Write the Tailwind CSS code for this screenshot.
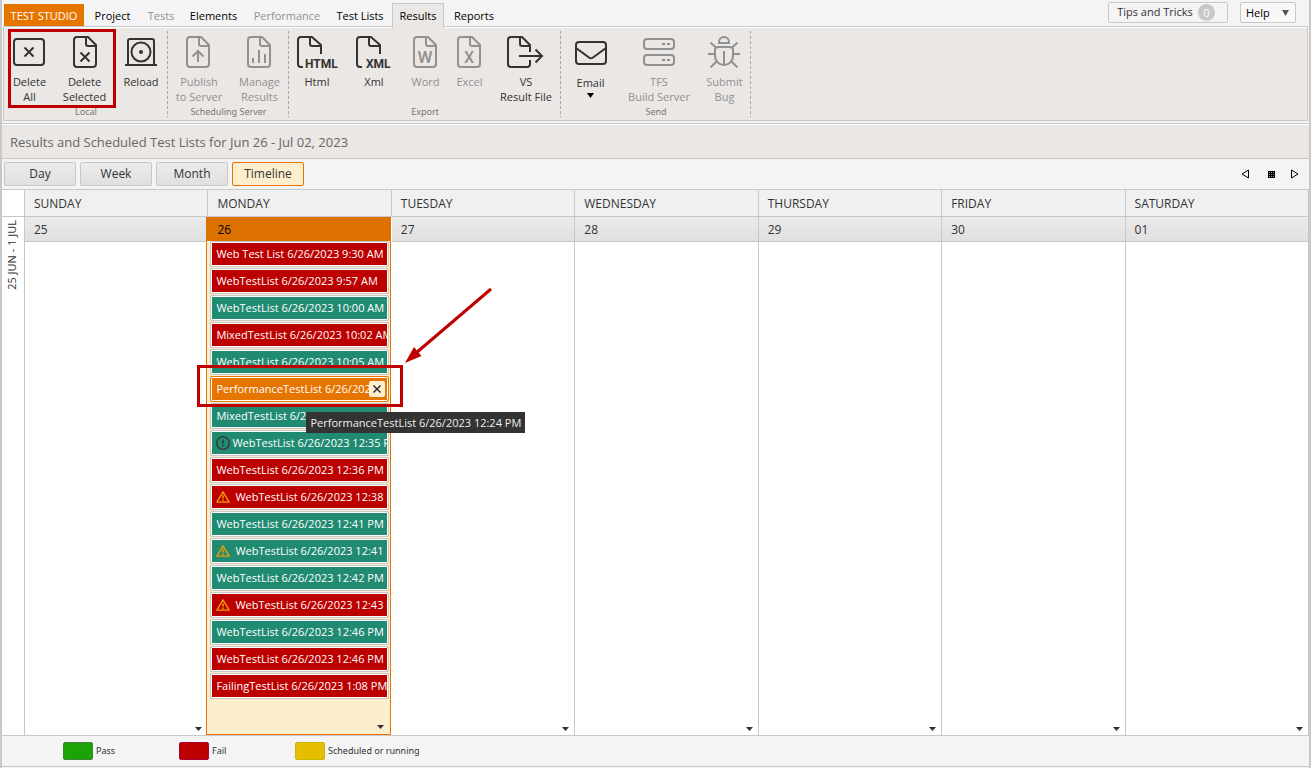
<!DOCTYPE html>
<html lang="en">
<head>
<meta charset="utf-8">
<meta name="viewport" content="width=device-width, initial-scale=1">
<title>Test Studio - Results</title>
<script src="https://cdn.jsdelivr.net/npm/@tailwindcss/browser@4"></script>
</head>
<body class="min-h-screen bg-[#f4f4f4] font-['Open_Sans','Noto_Sans',sans-serif] text-[11px] text-[#333]">
<svg class="hidden" aria-hidden="true">
  <symbol id="file" viewBox="0 0 40 32"><path fill="none" stroke="currentColor" stroke-width="2" stroke-linejoin="round" d="M12 1h11l8 8v19a3 3 0 0 1-3 3H12a3 3 0 0 1-3-3V4a3 3 0 0 1 3-3zM21 1v7a2 2 0 0 0 2 2h8"/></symbol>
  <symbol id="warn" viewBox="0 0 14 12"><path fill="none" stroke="#f0a000" stroke-width="1.3" stroke-linejoin="round" d="M7 .9L13.2 11.2H.8z"/><path stroke="#f0a000" stroke-width="1.5" d="M7 4.3v3.2M7 8.5v1.5"/></symbol>
  <symbol id="down" viewBox="0 0 7 4"><path fill="#333" d="M0 0h7L3.500 4z"/></symbol>
</svg>
<div class="flex min-h-screen flex-col border-x-2 border-[#c8c8c8] pb-px">

  <header class="flex h-[26px] items-start justify-between pl-[2px] pr-[13px]">
    <nav class="flex pt-[3px] text-[11px]">
      <button class="mt-px h-[23px] w-20 bg-[#e67500] pt-px text-white">TEST STUDIO</button>
      <button class="h-[25px] w-[57px] pt-[2px] text-black">Project</button>
      <button class="h-[25px] w-10 pt-[2px] text-[#919191]">Tests</button>
      <button class="h-[25px] w-[65px] pt-[2px] text-black">Elements</button>
      <button class="h-[25px] w-[82px] pt-[2px] text-[#919191]">Performance</button>
      <button class="h-[25px] w-16 pt-[2px] text-black">Test Lists</button>
      <button class="relative z-10 h-[25px] w-[52px] border border-b-0 border-[#c8c8c8] bg-[#ebe7e4] text-black">Results</button>
      <button class="h-[25px] w-[60px] pt-[2px] text-black">Reports</button>
    </nav>
    <div class="flex gap-3 pt-[2px]">
      <button class="flex h-[21px] w-[120px] items-center justify-center gap-[5px] rounded-xs border border-[#c8c8c8] pr-1">Tips and Tricks <span class="h-[17px] w-[17px] rounded-full bg-[#c8c8c8] leading-[17px] text-white">0</span></button>
      <button class="flex h-[21px] w-[56px] items-center justify-between rounded-xs border border-[#c8c8c8] bg-[#f8f8f8] pl-[5px] pr-[6px] pt-px text-black">Help <svg class="h-[6px] w-[7px]" viewBox="0 0 7 6"><path fill="#555" d="M0 0h7L3.500 6z"/></svg></button>
    </div>
  </header>

  <section class="ml-px mr-px flex h-[95px] border border-[#c8c8c8] bg-[#ebe7e4] shadow-[inset_0_1px_0_#fff]" aria-label="Ribbon">
    <div class="relative flex flex-col">
      <div class="flex h-[79px] pt-[9px] leading-[15px]">
        <button class="flex w-[51px] flex-col items-center gap-[6px]"><svg class="h-8 w-[42px]" viewBox="0 0 42 32" fill="none" stroke="currentColor" stroke-width="2"><rect x="5" y="3" width="30" height="26" rx="3"/><path d="M15.500 11.500l9 9M24.500 11.500l-9 9"/></svg><span>Delete<br>All</span></button>
        <button class="flex w-[59px] flex-col items-center gap-[6px]"><svg class="h-8 w-10" viewBox="0 0 40 32" fill="none" stroke="currentColor" stroke-width="2"><use href="#file" width="40" height="32"/><path d="M15.500 16.500l9 9M24.500 16.500l-9 9"/></svg><span>Delete<br>Selected</span></button>
        <button class="flex w-[54px] flex-col items-center gap-[6px]"><svg class="h-8 w-10" viewBox="0 0 40 32" fill="none" stroke="currentColor" stroke-width="2"><path d="M7 29V5a2 2 0 0 1 2-2h22a2 2 0 0 1 2 2v24M4 29h32"/><circle cx="20" cy="16" r="9.500"/><circle cx="20" cy="16" r="2" fill="currentColor" stroke="none"/></svg><span>Reload</span></button>
      </div>
      <div class="text-center font-['Noto_Sans'] text-[9px] leading-3 text-[#777]">Local</div>
      <svg class="absolute right-0 top-1 h-[86px] w-px"><path stroke="#a8a8a8" stroke-width="2" stroke-dasharray="3 2" d="M0 0v86"/></svg>
      <div class="absolute left-1 top-[2px] h-[79px] w-[108px] border-3 border-[#bf0000]"></div>
    </div>
    <div class="relative flex flex-col text-[#919191]">
      <div class="flex h-[79px] pt-[9px] leading-[15px]">
        <button class="flex w-[62px] flex-col items-center gap-[6px]"><svg class="h-8 w-[42px]" viewBox="0 0 42 32" fill="none" stroke="currentColor" stroke-width="2"><use href="#file" width="40" height="32"/><path d="M20 26V15M14.500 20.500L20 15l5.500 5.500"/></svg><span>Publish<br>to Server</span></button>
        <button class="flex w-[59px] flex-col items-center gap-[6px]"><svg class="h-8 w-[42px]" viewBox="0 0 42 32" fill="none" stroke="currentColor" stroke-width="2"><use href="#file" width="40" height="32"/><path d="M14 27v-5M20 27V14M26 27V18"/></svg><span>Manage<br>Results</span></button>
      </div>
      <div class="text-center font-['Noto_Sans'] text-[9px] leading-3 text-[#777]">Scheduling Server</div>
      <svg class="absolute right-0 top-1 h-[86px] w-px"><path stroke="#a8a8a8" stroke-width="2" stroke-dasharray="3 2" d="M0 0v86"/></svg>
    </div>
    <div class="relative flex flex-col">
      <div class="flex h-[79px] pt-[9px] leading-[15px]">
        <button class="flex w-14 flex-col items-center gap-[6px]"><svg class="h-8 w-10 overflow-visible" viewBox="0 0 40 32" fill="none" stroke="currentColor" stroke-width="2"><path stroke-linejoin="round" d="M6 31H4a3 3 0 0 1-3-3V4a3 3 0 0 1 3-3h11l9 8v9M13 1v7a2 2 0 0 0 2 2h9"/><text x="8" y="32" font-size="12" font-weight="700" fill="currentColor" stroke="none" font-family="Roboto">HTML</text></svg><span>Html</span></button>
        <button class="flex w-[58px] flex-col items-center gap-[6px]"><svg class="h-8 w-10 overflow-visible" viewBox="0 0 40 32" fill="none" stroke="currentColor" stroke-width="2"><path stroke-linejoin="round" d="M8 31H6a3 3 0 0 1-3-3V4a3 3 0 0 1 3-3h11l9 8v9M15 1v7a2 2 0 0 0 2 2h9"/><text x="12" y="32" font-size="12" font-weight="700" fill="currentColor" stroke="none" font-family="Roboto">XML</text></svg><span>Xml</span></button>
        <button class="flex w-[45px] flex-col items-center gap-[6px] text-[#919191]"><svg class="h-8 w-[42px]" viewBox="0 0 42 32" fill="none"><use href="#file" width="40" height="32"/><text x="20" y="27" text-anchor="middle" font-size="17" font-weight="500" fill="currentColor" font-family="Roboto">W</text></svg><span>Word</span></button>
        <button class="flex w-[43px] flex-col items-center gap-[6px] text-[#919191]"><svg class="h-8 w-[42px]" viewBox="0 0 42 32" fill="none"><use href="#file" width="40" height="32"/><text x="20" y="27" text-anchor="middle" font-size="16" font-weight="500" fill="currentColor" font-family="Roboto">X</text></svg><span>Excel</span></button>
        <button class="flex w-[70px] flex-col items-center gap-[6px]"><svg class="h-8 w-[42px]" viewBox="0 0 42 32" fill="none" stroke="currentColor" stroke-width="2"><path stroke-linejoin="round" d="M25 16V9l-8-8H6a3 3 0 0 0-3 3v24a3 3 0 0 0 3 3h16a3 3 0 0 0 3-3v-4M15 1v7a2 2 0 0 0 2 2h8"/><path d="M14 20h23M30.500 13.500L37 20l-6.500 6.500"/></svg><span>VS<br>Result File</span></button>
      </div>
      <div class="text-center font-['Noto_Sans'] text-[9px] leading-3 text-[#777]">Export</div>
      <svg class="absolute right-0 top-1 h-[86px] w-px"><path stroke="#a8a8a8" stroke-width="2" stroke-dasharray="3 2" d="M0 0v86"/></svg>
    </div>
    <div class="relative flex flex-col">
      <div class="flex h-[79px] pt-[9px] leading-[15px]">
        <button class="flex w-[59px] flex-col items-center gap-[7px]"><svg class="h-8 w-10" viewBox="0 0 40 32" fill="none" stroke="currentColor" stroke-width="2"><rect x="5" y="6" width="30" height="22" rx="3"/><path d="M5 12l13 9.500q2 1.500 4 0L35 12"/></svg><span class="flex flex-col items-center">Email<svg class="mt-[3px] h-[5px] w-[7px]" viewBox="0 0 7 5"><path fill="#000" d="M0 0h7L3.500 5z"/></svg></span></button>
        <button class="flex w-[78px] flex-col items-center gap-[6px] text-[#919191]"><svg class="h-8 w-10" viewBox="0 0 40 32" fill="none" stroke="currentColor" stroke-width="2"><rect x="5" y="3" width="30" height="10" rx="3"/><rect x="5" y="19" width="30" height="10" rx="3"/><path d="M23 8h3M28 8h3M23 24h3M28 24h3"/></svg><span>TFS<br>Build Server</span></button>
        <button class="flex w-[53px] flex-col items-center gap-[6px] text-[#919191]"><svg class="h-8 w-[42px]" viewBox="0 0 42 32" fill="none" stroke="currentColor" stroke-width="2"><path d="M15 7V6a5 5 0 0 1 10 0v1zM14 11h12a3 3 0 0 1 3 3v6c0 5-4 9-9 9s-9-4-9-9v-6a3 3 0 0 1 3-3zM20 15v14M4 18h7M29 18h7M6.500 6.500l6 5.500M33.500 6.500l-6 5.500M6.500 31.500l6-6M33.500 31.500l-6-6"/></svg><span>Submit<br>Bug</span></button>
      </div>
      <div class="text-center font-['Noto_Sans'] text-[9px] leading-3 text-[#777]">Send</div>
      <svg class="absolute right-0 top-1 h-[86px] w-px"><path stroke="#a8a8a8" stroke-width="2" stroke-dasharray="3 2" d="M0 0v86"/></svg>
    </div>
  </section>

  <h1 class="mt-[2px] h-9 border-y border-[#c8c8c8] bg-[#ebe7e4] pl-2 text-[13px] leading-9 text-[#666] shadow-[inset_0_1px_0_#fff]">Results and Scheduled Test Lists for Jun 26 - Jul 02, 2023</h1>

  <div class="flex h-[30px] items-center justify-between pl-[2px] pr-1">
    <div class="flex gap-1 text-[12px]">
      <button class="h-6 w-[72px] rounded-xs border border-[#c8c8c8] bg-linear-to-b from-[#ebebeb] to-[#e0e0e0]">Day</button>
      <button class="h-6 w-[72px] rounded-xs border border-[#c8c8c8] bg-linear-to-b from-[#ebebeb] to-[#e0e0e0]">Week</button>
      <button class="h-6 w-[72px] rounded-xs border border-[#c8c8c8] bg-linear-to-b from-[#ebebeb] to-[#e0e0e0]">Month</button>
      <button class="h-6 w-[72px] rounded-xs border border-[#e67500] bg-[#fdefcd]">Timeline</button>
    </div>
    <div class="flex items-center">
      <button class="flex w-6 justify-center" aria-label="Previous"><svg class="h-[10px] w-2" viewBox="0 0 8 10"><path fill="none" stroke="#000" d="M7.500 1v8L1 5z"/></svg></button>
      <button class="flex w-7 justify-center" aria-label="Today"><svg class="h-[7px] w-[7px]" viewBox="0 0 7 7"><path fill="#000" d="M0 0h7v7H0z"/><path stroke="#999" stroke-dasharray="1 1" d="M1 1.500h5M1 3.500h5M1 5.500h5"/></svg></button>
      <button class="flex w-5 justify-center" aria-label="Next"><svg class="h-[10px] w-2" viewBox="0 0 8 10"><path fill="none" stroke="#000" d="M.5 1v8L7 5z"/></svg></button>
    </div>
  </div>

  <main class="flex grow border-y border-[#c8c8c8] bg-white">
    <div class="flex w-[23px] flex-none flex-col border-r border-[#c8c8c8]">
      <div class="h-[27px] border-b border-[#c8c8c8]"></div>
      <div class="flex justify-center pr-px pt-[3px] text-[11px]"><span class="rotate-180 [writing-mode:vertical-rl]">25 JUN - 1 JUL</span></div>
    </div>
    <div class="grid grow grid-cols-7 text-[12px]">
      <section class="flex flex-col border-r border-[#c8c8c8]">
        <h2 class="h-[27px] border-b border-[#c8c8c8] bg-[#f0f0f0] pl-[9px] leading-7">SUNDAY</h2>
        <div class="h-[25px] border-b border-[#c8c8c8] bg-linear-to-b from-[#ebebeb] to-[#e0e0e0] pl-[9px] leading-[26px]">25</div>
        <div class="flex grow items-end justify-end p-[5px] pb-1"><svg class="h-1 w-[7px]"><use href="#down"/></svg></div>
      </section>
      <section class="flex flex-col">
        <h2 class="h-[27px] border-b border-r border-[#c8c8c8] bg-[#f0f0f0] pl-[9px] leading-7">MONDAY</h2>
        <div class="-ml-[2px] mr-px flex grow flex-col">
          <div class="h-6 bg-[#dc7000] pl-[11px] leading-[26px] text-black">26</div>
          <div class="flex grow flex-col border border-t-0 border-[#e67500] bg-[#fdefcd] pl-[3px] pr-px">
            <ul id="events" class="flex flex-col gap-px text-[11px] text-white"></ul>
            <div class="flex grow items-end justify-end p-[5px]"><svg class="h-1 w-[7px]"><use href="#down"/></svg></div>
          </div>
        </div>
      </section>
      <section class="flex flex-col border-r border-[#c8c8c8]">
        <h2 class="h-[27px] border-b border-[#c8c8c8] bg-[#f0f0f0] pl-[9px] leading-7">TUESDAY</h2>
        <div class="h-[25px] border-b border-[#c8c8c8] bg-linear-to-b from-[#ebebeb] to-[#e0e0e0] pl-[9px] leading-[26px]">27</div>
        <div class="flex grow items-end justify-end p-[5px] pb-1"><svg class="h-1 w-[7px]"><use href="#down"/></svg></div>
      </section>
      <section class="flex flex-col border-r border-[#c8c8c8]">
        <h2 class="h-[27px] border-b border-[#c8c8c8] bg-[#f0f0f0] pl-[9px] leading-7">WEDNESDAY</h2>
        <div class="h-[25px] border-b border-[#c8c8c8] bg-linear-to-b from-[#ebebeb] to-[#e0e0e0] pl-[9px] leading-[26px]">28</div>
        <div class="flex grow items-end justify-end p-[5px] pb-1"><svg class="h-1 w-[7px]"><use href="#down"/></svg></div>
      </section>
      <section class="flex flex-col border-r border-[#c8c8c8]">
        <h2 class="h-[27px] border-b border-[#c8c8c8] bg-[#f0f0f0] pl-[9px] leading-7">THURSDAY</h2>
        <div class="h-[25px] border-b border-[#c8c8c8] bg-linear-to-b from-[#ebebeb] to-[#e0e0e0] pl-[9px] leading-[26px]">29</div>
        <div class="flex grow items-end justify-end p-[5px] pb-1"><svg class="h-1 w-[7px]"><use href="#down"/></svg></div>
      </section>
      <section class="flex flex-col border-r border-[#c8c8c8]">
        <h2 class="h-[27px] border-b border-[#c8c8c8] bg-[#f0f0f0] pl-[9px] leading-7">FRIDAY</h2>
        <div class="h-[25px] border-b border-[#c8c8c8] bg-linear-to-b from-[#ebebeb] to-[#e0e0e0] pl-[9px] leading-[26px]">30</div>
        <div class="flex grow items-end justify-end p-[5px] pb-1"><svg class="h-1 w-[7px]"><use href="#down"/></svg></div>
      </section>
      <section class="flex flex-col border-r border-[#c8c8c8]">
        <h2 class="h-[27px] border-b border-[#c8c8c8] bg-[#f0f0f0] pl-[9px] leading-7">SATURDAY</h2>
        <div class="h-[25px] border-b border-[#c8c8c8] bg-linear-to-b from-[#ebebeb] to-[#e0e0e0] pl-[9px] leading-[26px]">01</div>
        <div class="flex grow items-end justify-end p-[5px] pb-1"><svg class="h-1 w-[7px]"><use href="#down"/></svg></div>
      </section>
    </div>
  </main>

  <footer class="flex h-[31px] items-center border-b border-[#c8c8c8] pl-[61px] font-['Noto_Sans'] text-[9px]">
    <div class="flex w-[116px] items-center gap-[3px]"><span class="h-[18px] w-[30px] rounded-xs border border-[#3f7f3a] bg-[#1ca406]"></span>Pass</div>
    <div class="flex w-[116px] items-center gap-[3px]"><span class="h-[18px] w-[30px] rounded-xs border border-[#b0003a] bg-[#bc0000]"></span>Fail</div>
    <div class="flex items-center gap-[3px]"><span class="h-[18px] w-[30px] rounded-xs border border-[#c9b800] bg-[#e6be00]"></span>Scheduled or running</div>
  </footer>
</div>

<script>
const warn = '<svg class="mr-[5px] h-3 w-[14px] flex-none"><use href="#warn"/></svg>';
const info = '<svg class="mr-[2px] h-[14px] w-[14px] flex-none" viewBox="0 0 14 14"><circle cx="7" cy="7" r="6.300" fill="none" stroke="#333" stroke-width="1.300"/><path stroke="#333" stroke-width="1.300" d="M7 3.500v4.500M7 9v1.500"/></svg>';
const overlay = `
  <button class="absolute right-1 top-[5px] flex h-4 w-4 items-center justify-center rounded-xs bg-[#fdefcd]" aria-label="Delete"><svg class="h-2 w-2" viewBox="0 0 8 8"><path stroke="#222" stroke-width="1.400" d="M.5 .5l7 7M7.500 .5l-7 7"/></svg></button>
  <div class="absolute -left-[13px] -right-[14px] -top-[11px] h-[42px] border-3 border-[#bf0000]"></div>
  <svg class="absolute -top-[89px] left-[195px] h-[77px] w-[90px]" viewBox="0 0 90 77"><path stroke="#bf0000" stroke-width="3" d="M86 2L11 66"/><path fill="#bf0000" d="M0 76L9 60l7.500 9z"/></svg>
  <div role="tooltip" class="absolute left-24 top-9 h-[21px] bg-[#333] px-1 leading-[21px] whitespace-nowrap text-[#eee]">PerformanceTestList 6/26/2023 12:24 PM</div>`;
const R = 'bg-[#bc0000] border-[#c8c8c8]', G = 'bg-[#218b72] border-[#c8c8c8]', O = 'bg-[#e67500] border-[#e67500]';
const rows = [
  [R, 'Web Test List 6/26/2023 9:30 AM'],
  [R, 'WebTestList 6/26/2023 9:57 AM'],
  [G, 'WebTestList 6/26/2023 10:00 AM'],
  [R, 'MixedTestList 6/26/2023 10:02 AM'],
  [G, 'WebTestList 6/26/2023 10:05 AM'],
  [O, 'PerformanceTestList 6/26/2023 12:24 PM', '', overlay],
  [G, 'MixedTestList 6/26/2023 12:30 PM'],
  [G, 'WebTestList 6/26/2023 12:35 PM', info],
  [R, 'WebTestList 6/26/2023 12:36 PM'],
  [R, 'WebTestList 6/26/2023 12:38 PM', warn],
  [G, 'WebTestList 6/26/2023 12:41 PM'],
  [G, 'WebTestList 6/26/2023 12:41 PM', warn],
  [G, 'WebTestList 6/26/2023 12:42 PM'],
  [R, 'WebTestList 6/26/2023 12:43 PM', warn],
  [G, 'WebTestList 6/26/2023 12:46 PM'],
  [R, 'WebTestList 6/26/2023 12:46 PM'],
  [R, 'FailingTestList 6/26/2023 1:08 PM']
];
document.getElementById('events').innerHTML = rows.map(([tone, text, icon = '', over = '']) =>
  `<li class="relative ${over ? 'z-20' : ''}"><div class="flex h-[26px] items-center rounded-xs border ${tone} p-px shadow-[inset_0_0_0_1px_#fff]"><div class="flex w-0 grow items-center overflow-hidden pl-1 whitespace-nowrap">${icon}${text}</div></div>${over}</li>`).join('');
</script>
</body>
</html>
